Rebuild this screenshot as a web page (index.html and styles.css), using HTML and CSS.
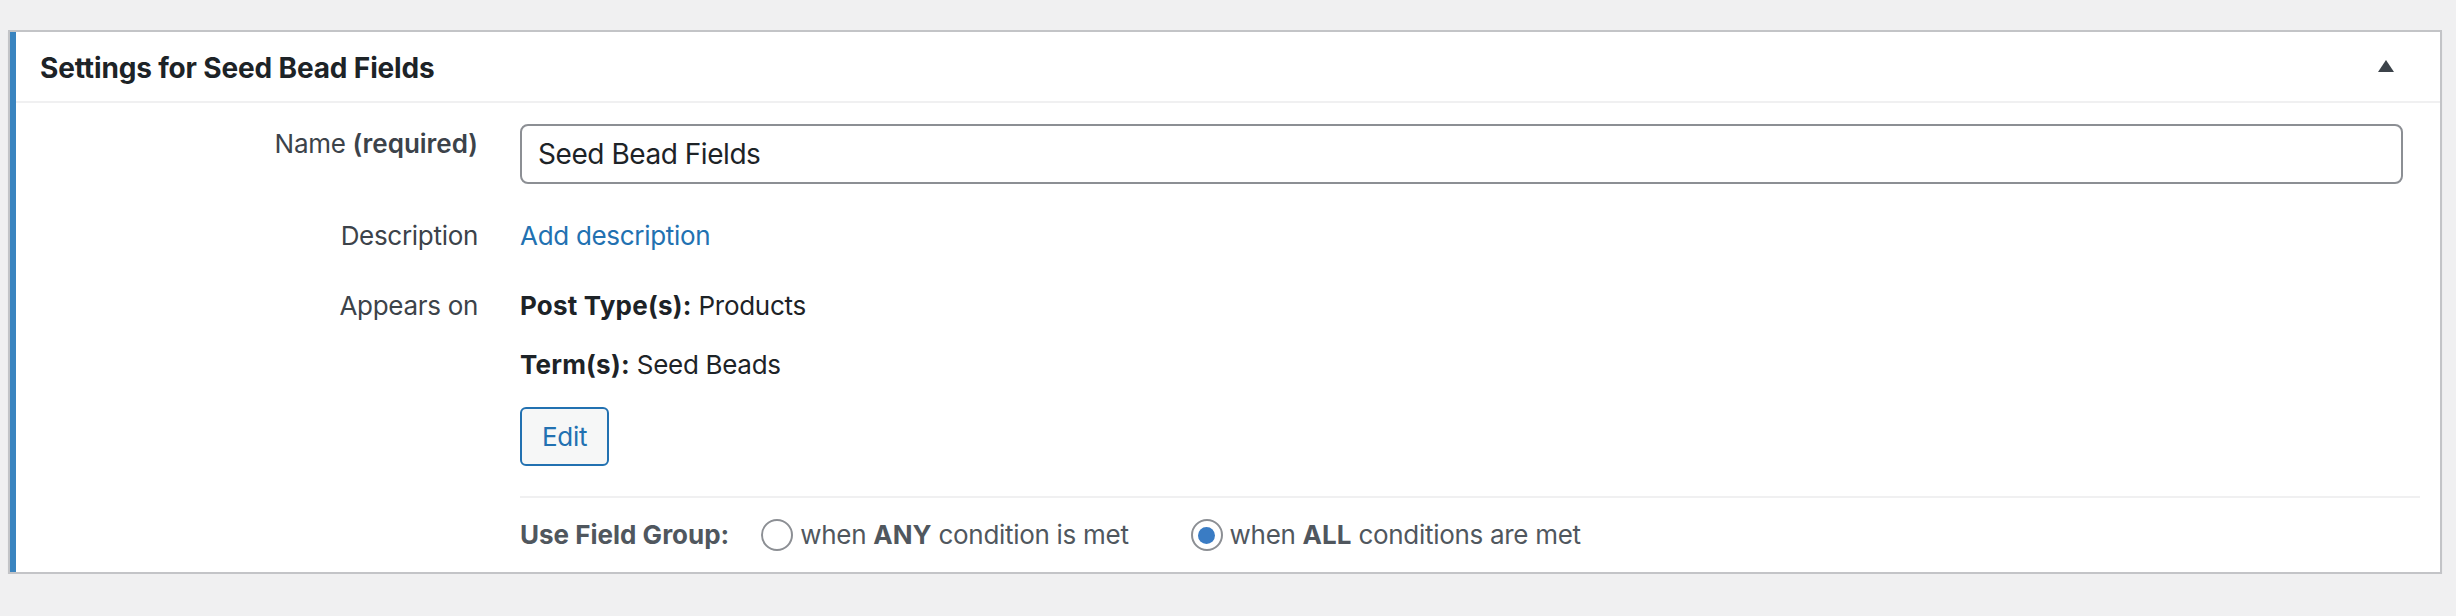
FILE: index.html
```html
<!DOCTYPE html>
<html>
<head>
<meta charset="utf-8">
<link rel="stylesheet" href="styles.css">
</head>
<body>
<div class="postbox">
  <div class="inner">
    <div class="header">
      <h2 class="title">Settings for Seed Bead Fields</h2>
      <svg class="toggle" width="16" height="12" viewBox="0 0 16 12"><polygon points="8,0 16,12 0,12" fill="#3c434a"/></svg>
    </div>
    <div class="form">
      <div class="row row-name">
        <div class="label">Name <b>(required)</b></div>
        <div class="field"><div class="input">Seed Bead Fields</div></div>
      </div>
      <div class="row row-desc">
        <div class="label">Description</div>
        <div class="field"><span class="link">Add description</span></div>
      </div>
      <div class="row row-appears">
        <div class="label">Appears on</div>
        <div class="field">
          <p class="line"><b>Post Type(s):</b> Products</p>
          <p class="line line-term"><b>Term(s):</b> Seed Beads</p>
          <span class="button">Edit</span>
        </div>
      </div>
      <div class="divider"></div>
      <div class="usegroup">
        <b class="ug-label">Use Field Group:</b>
        <span class="radio"></span><span class="opt">when <b>ANY</b> condition is met</span>
        <span class="radio checked"></span><span class="opt">when <b>ALL</b> conditions are met</span>
      </div>
    </div>
  </div>
</div>
</body>
</html>
```
FILE: styles.css
```css
html, body {
  margin: 0;
  padding: 0;
}
body {
  background: #f0f0f1;
  padding: 30px 14px 0 8px;
  font-family: Inter, "Noto Sans", sans-serif;
  color: #3c434a;
  font-size: 26px;
  letter-spacing: -0.3px;
}
b {
  letter-spacing: 0;
}
.postbox {
  background: #fff;
  border: 2px solid #c3c4c7;
  box-shadow: 0 2px 2px rgba(0, 0, 0, 0.04);
}
.inner {
  border-left: 6px solid #3a84bf;
}
.header {
  height: 69px;
  display: flex;
  align-items: center;
  justify-content: space-between;
  padding: 0 46px 0 24px;
  border-bottom: 2px solid #f0f0f1;
}
.title {
  margin: 0;
  font-size: 28px;
  font-weight: 700;
  color: #1d2327;
  line-height: 40px;
  padding-top: 2px;
  letter-spacing: -0.15px;
}
.toggle {
  display: block;
  margin-bottom: 2px;
}
.form {
  padding: 21px 0 17px 0;
}
.row {
  display: flex;
  align-items: flex-start;
}
.label {
  width: 462px;
  flex: none;
  margin-right: 42px;
  text-align: right;
  line-height: 40px;
  color: #3c434a;
}
.label b {
  font-weight: 600;
}
.field {
  flex: 1;
  margin-right: 37px;
  line-height: 40px;
}
.input {
  height: 56px;
  border: 2px solid #8c8f94;
  border-radius: 8px;
  padding: 0 16px;
  font-size: 28px;
  line-height: 56px;
  color: #1d2327;
  letter-spacing: -0.45px;
}
.row-desc {
  margin-top: 32px;
}
.link {
  color: #2271b1;
}
.row-appears {
  margin-top: 30px;
}
.line {
  margin: 0;
  color: #1d2327;
}
.line b {
  font-weight: 700;
  letter-spacing: 0.2px;
}
.line-term {
  margin-top: 19px;
}
.button {
  display: inline-block;
  margin-top: 22px;
  height: 55px;
  line-height: 55px;
  padding: 0 20px;
  border: 2px solid #2271b1;
  border-radius: 6px;
  background: #f6f7f7;
  color: #2271b1;
}
.divider {
  height: 2px;
  background: #f0f0f1;
  margin: 30px 20px 0 504px;
}
.usegroup {
  margin: 17px 0 0 504px;
  display: flex;
  align-items: center;
  line-height: 40px;
  color: #50575e;
}
.ug-label {
  font-weight: 700;
  margin-right: 32px;
}
.opt b {
  font-weight: 700;
}
.radio {
  width: 28px;
  height: 28px;
  border: 2px solid #8c8f94;
  border-radius: 50%;
  background: #fff;
  margin-right: 7px;
  display: flex;
  align-items: center;
  justify-content: center;
  flex: none;
}
.radio.checked::before {
  content: "";
  width: 17px;
  height: 17px;
  border-radius: 50%;
  background: #3a7cc4;
}
.opt + .radio {
  margin-left: 62px;
}
```
